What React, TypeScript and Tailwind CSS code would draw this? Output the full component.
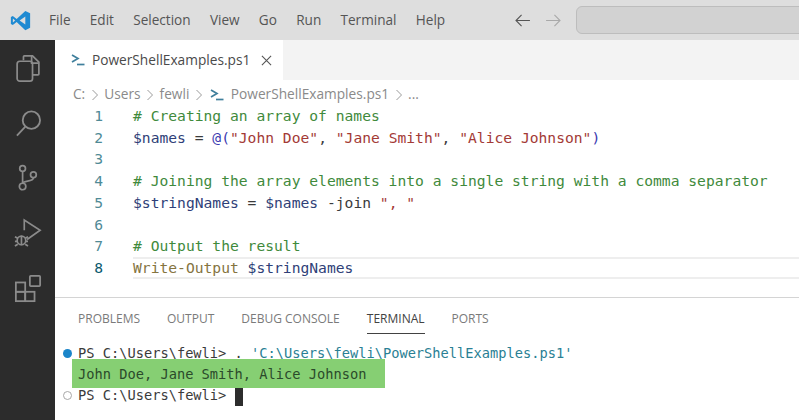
import React from 'react';

const ui = "font-['Open_Sans','Noto_Sans',sans-serif]";
const mono = "font-['DejaVu_Sans_Mono','Liberation_Mono',monospace]";

const menus = ['File', 'Edit', 'Selection', 'View', 'Go', 'Run', 'Terminal', 'Help'];
const panelTabs = ['PROBLEMS', 'OUTPUT', 'DEBUG CONSOLE', 'TERMINAL', 'PORTS'];

const comment = 'text-[#3f8a3c]';
const variable = 'text-[#2f3f78]';
const str = 'text-[#a33a36]';
const plain = 'text-[#3b3b3b]';

const PsIcon = ({ className }: { className?: string }) => (
  <svg viewBox="0 0 14 12" className={className} fill="none" stroke="#3f7f9c" strokeWidth="1.7">
    <path d="M1 1 L7 4.5 L1 8" />
    <path d="M6 10.5 H13.5" />
  </svg>
);

const Chevron = () => (
  <svg viewBox="0 0 6 12" className="w-[6px] h-[12px]" fill="none" stroke="#9a9a9a" strokeWidth="1">
    <path d="M0.5 1 L5.5 6 L0.5 11" />
  </svg>
);

const VsLogo = () => (
  <svg viewBox="0 0 24 24" className="w-[21px] h-[21px]">
    <path d="M17.5 1 L23 3.6 V20.4 L17.5 23 L7.6 13.8 L3.2 17.2 L1 16 V8 L3.2 6.8 L7.6 10.2 Z" fill="#1f8ad2" />
    <path d="M17.5 7.4 L11 12 L17.5 16.6 Z" fill="#dddddd" />
    <path d="M3.3 9.6 V14.4 L5.9 12 Z" fill="#dddddd" />
  </svg>
);

const ActivityIcons = () => (
  <div className="flex flex-col items-center gap-[27px] pt-[14px] pl-px">
    <svg viewBox="0 0 28 32" className="w-[26px] h-[29px]" fill="none" stroke="#8b8b8b" strokeWidth="1.9">
      <path d="M9 7 V3 a1 1 0 0 1 1-1 H19 L26 9 V22 a1 1 0 0 1-1 1 H19" />
      <path d="M18 2 V10 H26" />
      <rect x="2" y="8" width="17" height="22" rx="3" />
    </svg>
    <svg viewBox="0 0 28 28" className="w-[27px] h-[27px]" fill="none" stroke="#8b8b8b" strokeWidth="1.9">
      <circle cx="17" cy="10.5" r="9" />
      <path d="M10.5 17.5 L2 26.5" />
    </svg>
    <svg viewBox="0 0 24 30" className="w-[22px] h-[27px]" fill="none" stroke="#8b8b8b" strokeWidth="1.9">
      <circle cx="6" cy="5" r="3.2" />
      <circle cx="18" cy="12" r="3.2" />
      <circle cx="6" cy="25" r="3.6" />
      <path d="M6 8.2 V21.4" />
      <path d="M18 15.2 C18 20 8 18 6 21" />
    </svg>
    <svg viewBox="0 0 30 32" className="w-[28px] h-[30px]" fill="none" stroke="#8b8b8b" strokeWidth="1.8">
      <path d="M11 13 V2 L28 13 L14 23" />
      <circle cx="8" cy="24" r="4.6" />
      <path d="M8 19 V29 M1 20 L4 21.5 M1 25 H3.5 M1 30 L4 28 M15 20 L12 21.5 M15 25 H12.5 M15 30 L12 28" />
    </svg>
    <svg viewBox="0 0 30 30" className="w-[28px] h-[28px]" fill="none" stroke="#8b8b8b" strokeWidth="1.9">
      <rect x="2" y="8" width="10" height="10" />
      <rect x="2" y="18" width="10" height="10" />
      <rect x="12" y="18" width="10" height="10" />
      <rect x="17" y="1" width="11" height="11" rx="1" />
    </svg>
  </div>
);

const CodeLine = ({ n, active, children }: { n: number; active?: boolean; children?: React.ReactNode }) => (
  <div className="flex h-[21.75px] items-center">
    <span className={`w-[48px] text-right ${active ? 'text-[#0b5a6e]' : 'text-[#4f8a96]'}`}>{n}</span>
    <span
      className={
        'ml-[30px] flex-1 h-full flex items-center whitespace-pre border-y-2 ' +
        (active ? 'border-[#eeeeee]' : 'border-transparent')
      }>
      {children}
    </span>
  </div>
);

const App = () => {
  return (
    <div className={`w-[799px] h-[420px] flex flex-col overflow-hidden bg-white ${ui}`}>
      {/* title bar */}
      <div className="h-[40px] shrink-0 bg-[#dedede] flex items-center">
        <div className="w-[40px] flex justify-center pl-px">
          <VsLogo />
        </div>
        <div className="flex gap-[19.25px] ml-[9px] text-[13.6px] text-[#555555]">
          {menus.map((m) => (
            <span key={m}>{m}</span>
          ))}
        </div>
        <div className="flex items-center gap-[16px] ml-[70px]">
          <svg viewBox="0 0 16 14" className="w-[15px] h-[13px]" fill="none" stroke="#555555" strokeWidth="1.2">
            <path d="M7 1 L1 7 L7 13 M1 7 H16" />
          </svg>
          <svg viewBox="0 0 16 14" className="w-[15px] h-[13px]" fill="none" stroke="#a9a9a9" strokeWidth="1.2">
            <path d="M9 1 L15 7 L9 13 M0 7 H15" />
          </svg>
        </div>
        <div className="ml-[15px] h-[28px] flex-1 mr-[-10px] rounded-[6px] bg-[#d2d2d2] border border-[#bdbdbd]" />
      </div>

      <div className="flex flex-1 min-h-0">
        {/* activity bar */}
        <div className="w-[55px] shrink-0 bg-[#2c2c2c]">
          <ActivityIcons />
        </div>

        <div className="flex-1 min-w-0 flex flex-col">
          {/* tabs */}
          <div className="h-[40px] shrink-0 bg-[#f3f3f3] flex">
            <div className="w-[228px] bg-white flex items-center pl-[16px]">
              <PsIcon className="w-[14px] h-[12px]" />
              <span className="ml-[7px] text-[13.7px] text-[#4a4a4a]">PowerShellExamples.ps1</span>
              <svg viewBox="0 0 12 12" className="w-[11px] h-[11px] ml-[11px]" fill="none" stroke="#555555" strokeWidth="1.2">
                <path d="M1 1 L11 11 M11 1 L1 11" />
              </svg>
            </div>
          </div>

          {/* breadcrumbs */}
          <div className="h-[25px] shrink-0 flex items-center gap-[6.5px] pl-[18px] pt-[4px] text-[13.7px] text-[#8a8a8a]">
            <span>C:</span>
            <Chevron />
            <span>Users</span>
            <Chevron />
            <span>fewli</span>
            <Chevron />
            <PsIcon className="w-[14px] h-[12px] ml-[2px]" />
            <span>PowerShellExamples.ps1</span>
            <Chevron />
            <span>...</span>
          </div>

          {/* editor */}
          <div className={`h-[192px] shrink-0 text-[14.65px] ${mono}`}>
            <CodeLine n={1}>
              <span className={comment}># Creating an array of names</span>
            </CodeLine>
            <CodeLine n={2}>
              <span className={variable}>$names</span>
              <span className={plain}> = </span>
              <span className="text-[#3a3ab0]">@(</span>
              <span className={str}>"John Doe"</span>
              <span className={plain}>, </span>
              <span className={str}>"Jane Smith"</span>
              <span className={plain}>, </span>
              <span className={str}>"Alice Johnson"</span>
              <span className="text-[#3a3ab0]">)</span>
            </CodeLine>
            <CodeLine n={3} />
            <CodeLine n={4}>
              <span className={comment}># Joining the array elements into a single string with a comma separator</span>
            </CodeLine>
            <CodeLine n={5}>
              <span className={variable}>$stringNames</span>
              <span className={plain}> = </span>
              <span className={variable}>$names</span>
              <span className={plain}> -join </span>
              <span className={str}>", "</span>
            </CodeLine>
            <CodeLine n={6} />
            <CodeLine n={7}>
              <span className={comment}># Output the result</span>
            </CodeLine>
            <CodeLine n={8} active>
              <span className="text-[#85743f]">Write-Output</span>
              <span className={plain}> </span>
              <span className={variable}>$stringNames</span>
            </CodeLine>
          </div>

          {/* panel */}
          <div className="relative flex-1 min-h-0 border-t border-[#d4d4d4]">
            <div className="flex gap-[27px] pl-[23px] pt-[12px] text-[12px] text-[#7a7a7a]">
              {panelTabs.map((t) => (
                <span
                  key={t}
                  className={
                    'pb-[5px] border-b ' +
                    (t === 'TERMINAL' ? 'text-[#424242] border-[#424242]' : 'border-transparent')
                  }>
                  {t}
                </span>
              ))}
            </div>

            <div className={`mt-[9px] text-[13.7px] leading-[21px] text-[#3b3b3b] ${mono}`}>
              <div className="flex items-center h-[21px]">
                <span className="ml-[8px] w-[9px] h-[9px] rounded-full bg-[#1a85c9]" />
                <span className="ml-[6px] whitespace-pre">
                  {'PS C:\\Users\\fewli> . '}
                  <span className="text-[#2a7f94]">{"'C:\\Users\\fewli\\PowerShellExamples.ps1'"}</span>
                </span>
              </div>
              <div className="h-[21px]" />
              <div className="flex items-center h-[21px]">
                <span className="ml-[8px] w-[9px] h-[9px] rounded-full border border-[#a8a8a8]" />
                <span className="ml-[6px] whitespace-pre">{'PS C:\\Users\\fewli> '}</span>
                <span className="w-[8px] h-[20px] bg-[#2d2d2d]" />
              </div>
            </div>

            {/* green highlight over the output line */}
            <div
              className={`absolute left-[17px] top-[61px] w-[313px] h-[29px] bg-[#86cf73] pl-[6px] text-[13.7px] leading-[31px] text-[#2b4a2b] whitespace-pre ${mono}`}>
              John Doe, Jane Smith, Alice Johnson
            </div>
          </div>
        </div>
      </div>
    </div>
  );
};

export default App;
